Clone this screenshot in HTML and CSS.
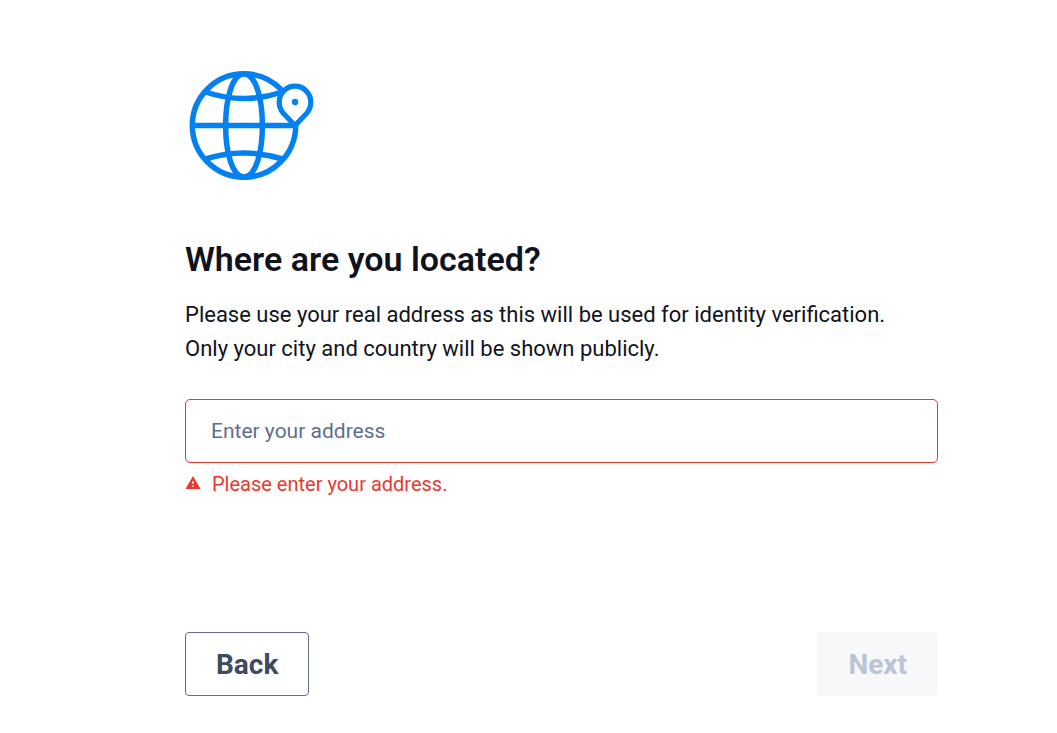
FILE: index.html
```html
<!DOCTYPE html>
<html lang="en">
<head>
<meta charset="utf-8">
<title>Where are you located?</title>
<link rel="stylesheet" href="styles.css">
</head>
<body>
<main class="step">
  <svg class="globe" viewBox="0 0 132 116" aria-hidden="true">
    <g class="globe-lines">
      <circle cx="59" cy="57.5" r="51.7"/>
      <path d="M59 5.8C34.500 7 34.500 108 59 109.200C83.500 108 83.500 7 59 5.800"/>
      <path d="M7 57.500H110M20.500 24Q59 37 97.500 24M20.500 91Q59 79 97.500 91"/>
    </g>
    <path class="globe-pin" d="M110 57.500L98.500 45.500C95.500 42 94.200 38 94.200 34A15.800 15.800 0 0 1 125.800 34C125.800 38 124.500 42 121.500 45.500Z"/>
    <circle class="globe-dot" cx="110" cy="34" r="3.200"/>
  </svg>
  <h1 class="title">Where are you located?</h1>
  <p class="intro">Please use your real address as this will be used for identity verification.<br>Only your city and country will be shown publicly.</p>
  <form class="form" novalidate>
    <input class="address" type="text" placeholder="Enter your address" aria-label="Address" aria-invalid="true" aria-describedby="address-error">
    <p class="error" id="address-error">
      <svg class="error-icon" viewBox="0 0 16 16" aria-hidden="true"><path d="M8 0L15.500 13H.5Z"/><path class="error-mark" d="M8 5V8M8 9.500V11"/></svg>
      Please enter your address.
    </p>
    <div class="actions">
      <button class="button button-back" type="button">Back</button>
      <button class="button button-next" type="submit" disabled>Next</button>
    </div>
  </form>
</main>
</body>
</html>
```
FILE: styles.css
```css
* { box-sizing: border-box; }
body { margin: 0; background: #fff; color: #10131c; font-family: Roboto, sans-serif; }
.step { max-width: 938px; padding: 68px 0 36px 185px; }
.globe { display: block; width: 132px; height: 116px; }
.globe-lines { fill: none; stroke: #0481f1; stroke-width: 5.5; }
.globe-pin { fill: #fff; stroke: #0481f1; stroke-width: 5.2; stroke-linejoin: round; }
.globe-dot { fill: #0481f1; }
.title { margin: 55px 0 0; font-size: 34px; line-height: 40px; font-weight: 600; }
.intro { margin: 19px 0 0; font-size: 22px; line-height: 34px; }
.form { margin: 33px 0 0; }
.address { display: block; width: 100%; height: 64px; padding: 0 25px; border: 1px solid #e93830; border-radius: 5px; font: 21px Roboto, sans-serif; }
.address::placeholder { color: #5f6e8e; opacity: 1; }
.error { display: flex; align-items: center; gap: 11px; margin: 9px 0 0; color: #e93830; font-size: 20px; line-height: 24px; }
.error-icon { width: 16px; height: 16px; fill: #e93830; }
.error-mark { stroke: #fff; stroke-width: 1.4; }
.actions { display: flex; justify-content: space-between; margin-top: 136px; }
.button { height: 64px; padding: 0 30px; border: 1px solid #5f6e8e; border-radius: 4px; background: #fff; color: #3d4a5f; font: 700 28px Roboto, sans-serif; }
.button-next { border-color: #f6f8fa; background: #f6f8fa; color: #b9c5d6; }
```
